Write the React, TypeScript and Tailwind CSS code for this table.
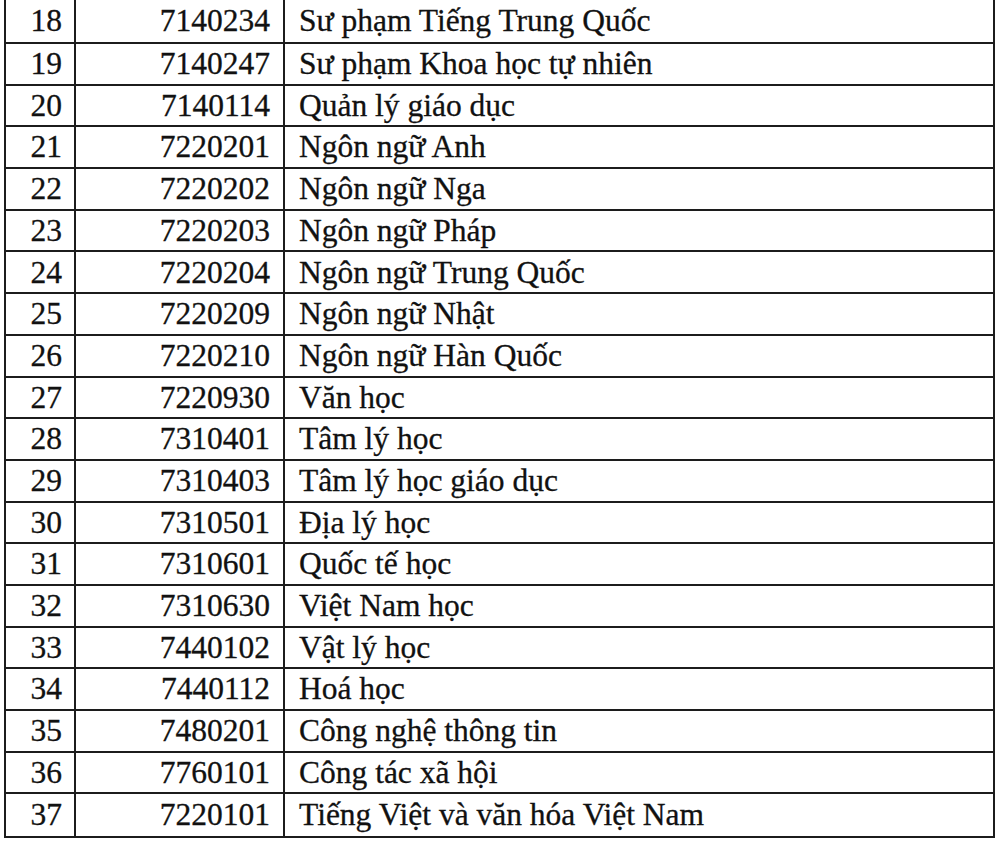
const rows: [string, string, string][] = [
  ["18", "7140234", "Sư phạm Tiếng Trung Quốc"],
  ["19", "7140247", "Sư phạm Khoa học tự nhiên"],
  ["20", "7140114", "Quản lý giáo dục"],
  ["21", "7220201", "Ngôn ngữ Anh"],
  ["22", "7220202", "Ngôn ngữ Nga"],
  ["23", "7220203", "Ngôn ngữ Pháp"],
  ["24", "7220204", "Ngôn ngữ Trung Quốc"],
  ["25", "7220209", "Ngôn ngữ Nhật"],
  ["26", "7220210", "Ngôn ngữ Hàn Quốc"],
  ["27", "7220930", "Văn học"],
  ["28", "7310401", "Tâm lý học"],
  ["29", "7310403", "Tâm lý học giáo dục"],
  ["30", "7310501", "Địa lý học"],
  ["31", "7310601", "Quốc tế học"],
  ["32", "7310630", "Việt Nam học"],
  ["33", "7440102", "Vật lý học"],
  ["34", "7440112", "Hoá học"],
  ["35", "7480201", "Công nghệ thông tin"],
  ["36", "7760101", "Công tác xã hội"],
  ["37", "7220101", "Tiếng Việt và văn hóa Việt Nam"],
];

export default function App() {
  return (
    <div className="h-[841px] w-[1000px] overflow-hidden bg-white">
      <div className="ml-[4px] w-[991px] border-x-2 border-b-2 border-[#1c1c1c] font-['Liberation_Serif','Times_New_Roman',serif] text-[31.5px] leading-none text-[#111111] [-webkit-text-stroke:0.3px_#111111]">
        {rows.map(([stt, code, name], i) => (
          <div
            key={stt}
            className={`flex border-[#1c1c1c] ${i === 0 ? "h-[44px]" : "h-[41.7px]"} ${
              i === rows.length - 1 ? "" : "border-b-2"
            }`}
          >
            <div className="flex w-[70px] items-center justify-end border-r-2 border-[#1c1c1c] pr-[12px]">
              {stt}
            </div>
            <div className="flex w-[209px] items-center justify-end border-r-2 border-[#1c1c1c] pr-[13px]">
              {code}
            </div>
            <div className="flex flex-1 items-center pl-[14px]">{name}</div>
          </div>
        ))}
      </div>
    </div>
  );
}
